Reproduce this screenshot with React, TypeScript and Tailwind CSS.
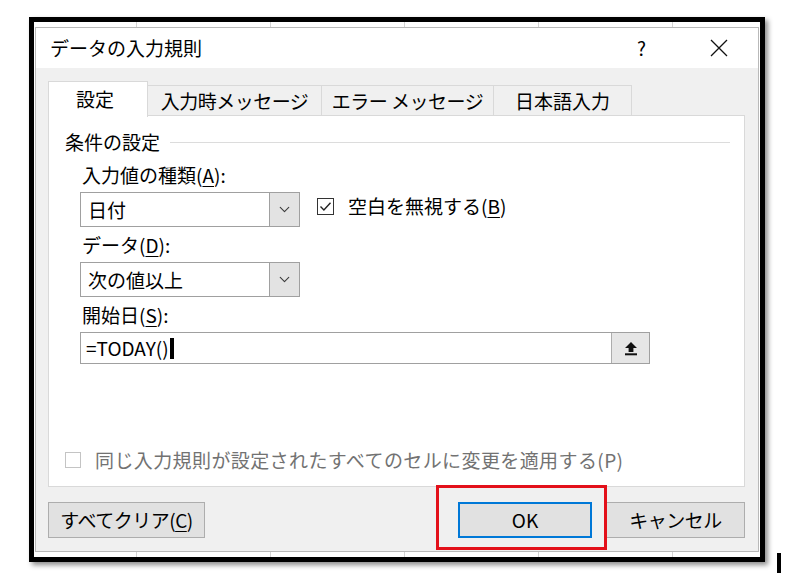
import { ChevronDown } from 'lucide-react';

const stripCells = ['w-[103px]', 'w-[134px]', 'w-[134px]', 'w-[134px]', 'w-[134px]'];

function GridStrip() {
  return (
    <div className="flex h-[5px] bg-white">
      {stripCells.map((w, i) => (
        <div key={i} className={`${w} shrink-0 border-r border-[#d4d4d4]`} />
      ))}
      <div className="flex-1" />
    </div>
  );
}

function Key({ k }: { k: string }) {
  return <span className="underline underline-offset-[3px] decoration-1">{k}</span>;
}

function Combo({ value }: { value: string }) {
  return (
    <div className="flex h-[35px] w-[220px] border border-[#a0a0a0] bg-white">
      <div className="flex flex-1 items-center pl-[7px] leading-[24px]">{value}</div>
      <div className="flex w-[30px] items-center justify-center border-l border-[#a0a0a0] bg-[#e3e3e3]">
        <ChevronDown className="h-[17px] w-[17px] text-[#3c3c3c]" strokeWidth={1.6} />
      </div>
    </div>
  );
}

function Btn({ children, className }: { children: React.ReactNode; className: string }) {
  return (
    <div className={`flex h-[36px] items-center justify-center bg-[#e1e1e1] leading-[24px] ${className}`}>
      {children}
    </div>
  );
}

export default function App() {
  return (
    <div className="flex h-[575px] w-[791px] items-start bg-white pl-[29px] pt-[17px] font-['Noto_Sans_CJK_JP','Noto_Sans',sans-serif] text-[19px] text-black">
      <div className="flex h-[545px] w-[736px] flex-col border-[5px] border-black bg-white shadow-[3px_3px_5px_rgba(0,0,0,0.45)]">
        <GridStrip />
        <div className="mx-[1px] flex flex-1 flex-col border border-[#b9b9b9]">
          {/* title bar */}
          <div className="flex h-[40px] items-center bg-white pl-[14px] pr-[30px] leading-[24px]">
            <span>データの入力規則</span>
            <span className="ml-auto mr-[64px]">?</span>
            <svg width="18" height="18" viewBox="0 0 18 18" className="text-[#111]">
              <path d="M1 1 L17 17 M17 1 L1 17" stroke="currentColor" strokeWidth="1.3" />
            </svg>
          </div>

          {/* body */}
          <div className="flex flex-1 flex-col bg-[#f0f0f0] pl-[12px] pt-[13px]">
            <div className="flex h-[34px] items-end">
              <div className="relative z-10 -mb-[2px] flex h-[36px] w-[100px] items-center justify-center border-x border-t border-[#d9d9d9] bg-white pb-[2px] pr-[6px] leading-[24px]">
                設定
              </div>
              <div className="flex h-[30px] w-[174px] items-center justify-center border-r border-t border-[#d9d9d9] leading-[24px] tracking-[-0.5px]">
                入力時メッセージ
              </div>
              <div className="flex h-[30px] w-[172px] items-center justify-center border-r border-t border-[#d9d9d9] leading-[24px] tracking-[-0.5px]">
                エラー メッセージ
              </div>
              <div className="flex h-[30px] w-[138px] items-center justify-center border-r border-t border-[#d9d9d9] leading-[24px]">
                日本語入力
              </div>
            </div>

            {/* panel */}
            <div className="flex h-[372px] w-[697px] flex-col border border-[#d9d9d9] bg-white pt-[14px]">
              <div className="flex items-center pl-[16px] pr-[14px] leading-[24px]">
                <span>条件の設定</span>
                <div className="ml-[10px] flex-1 border-t border-[#dcdcdc]" />
              </div>

              <div className="flex flex-col pl-[31px]">
                <div className="mt-[9px] pl-[2px] leading-[24px]">
                  入力値の種類(<Key k="A" />):
                </div>
                <div className="mt-[5px] flex items-start">
                  <Combo value="日付" />
                  <div className="ml-[17px] mt-[2px] flex h-[24px] items-center leading-[24px]">
                    <div className="flex h-[17px] w-[17px] items-center justify-center border border-[#333] bg-white">
                      <svg width="13" height="13" viewBox="0 0 13 13">
                        <path d="M1.5 6.6 L4.9 10 L11.5 2.8" fill="none" stroke="#222" strokeWidth="1.4" />
                      </svg>
                    </div>
                    <span className="ml-[14px]">
                      空白を無視する(<Key k="B" />)
                    </span>
                  </div>
                </div>

                <div className="mt-[6px] pl-[2px] leading-[24px]">
                  データ(<Key k="D" />):
                </div>
                <div className="mt-[5px]">
                  <Combo value="次の値以上" />
                </div>

                <div className="mt-[6px] pl-[2px] leading-[24px]">
                  開始日(<Key k="S" />):
                </div>
                <div className="mt-[5px] flex h-[32px] w-[570px] border border-[#a0a0a0] bg-white">
                  <div className="flex flex-1 items-center pl-[5px] leading-[24px]">
                    <span>=TODAY()</span>
                    <span className="ml-[1px] h-[21px] w-[4px] bg-black" />
                  </div>
                  <div className="flex w-[38px] items-center justify-center border-l border-[#adadad] bg-[#e6e6e6]">
                    <svg width="14" height="15" viewBox="0 0 14 15">
                      <path d="M7 1 L13 7 H9.4 V11 H4.6 V7 H1 Z" fill="#111" />
                      <rect x="1" y="12.3" width="12" height="2" fill="#111" />
                    </svg>
                  </div>
                </div>
              </div>

              <div className="mt-[84px] flex items-center pl-[16px] leading-[24px] text-[#727272]">
                <div className="h-[16px] w-[16px] border border-[#c4c4c4] bg-white" />
                <span className="ml-[14px] tracking-[0.4px]">同じ入力規則が設定されたすべてのセルに変更を適用する(P)</span>
              </div>
            </div>

            {/* buttons */}
            <div className="mt-[15px] flex w-[697px] items-start">
              <Btn className="w-[157px] border border-[#adadad] tracking-[-0.5px]">
                すべてクリア(<Key k="C" />)
              </Btn>
              <div className="relative ml-auto">
                <Btn className="w-[134px] border-2 border-[#0078d7]">OK</Btn>
                <div className="pointer-events-none absolute -bottom-[12px] -left-[22px] -right-[15px] -top-[17px] border-[3px] border-[#e3101a]" />
              </div>
              <Btn className="ml-[14px] w-[139px] border border-[#adadad] tracking-[-0.5px]">キャンセル</Btn>
            </div>
          </div>
        </div>
        <GridStrip />
      </div>
      <div className="ml-[12px] mt-[536px] h-[20px] w-[4px] bg-black" />
    </div>
  );
}
